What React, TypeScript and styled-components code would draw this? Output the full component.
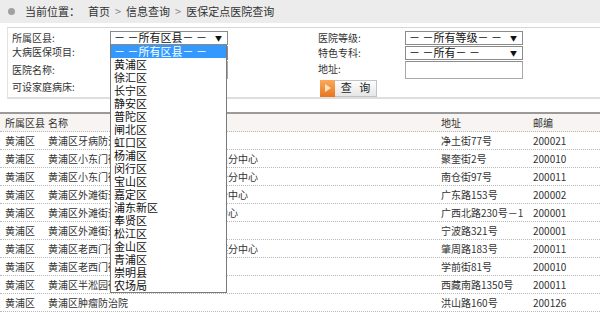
import React from "react";
import styled, { createGlobalStyle } from "styled-components";

const GlobalStyle = createGlobalStyle`
  html, body {
    margin: 0;
    padding: 0;
    background: #fff;
  }
  body {
    font-family: "Noto Sans CJK SC", "Liberation Sans", sans-serif;
    color: #333;
  }
`;

const Page = styled.div`
  position: relative;
  width: 600px;
  height: 313px;
  overflow: hidden;
  font-size: 10px;
  line-height: 1.2;
`;

const CrumbBar = styled.div`
  display: flex;
  align-items: center;
  height: 23px;
  padding-left: 8px;
  background: #ececec;
  font-size: 11px;
  color: #333;
  white-space: nowrap;
`;

const Dot = styled.span`
  flex-shrink: 0;
  display: block;
  width: 7px;
  height: 7px;
  border-radius: 50%;
  background: #a0a0a0;
  margin-right: 10px;
`;

const CrumbLink = styled.span`
  margin-left: 8px;
`;

const Sep = styled.span`
  margin: 0 5px;
  color: #888;
`;

const FormPanel = styled.div`
  margin: 4px 0 0 7px;
  padding: 3px 0 0 4px;
  height: 66px;
  border-top: 1px solid #d6d6d6;
  border-left: 1px solid #e2e2e2;
  border-bottom: 2px solid #dedede;
  display: grid;
  grid-template-columns: 98px 208px 87px 118px;
  grid-template-rows: 14px 14px 18px 18px;
  row-gap: 1px;
  align-items: center;
`;

const Label = styled.div<{ $up?: number }>`
  font-size: 10px;
  color: #333;
  white-space: nowrap;
  transform: translateY(${({ $up }) => -($up || 0)}px);
`;

const FieldWrap = styled.div`
  position: relative;
  height: 100%;
`;

const SelectBox = styled.div`
  box-sizing: border-box;
  display: flex;
  align-items: center;
  justify-content: space-between;
  width: 118px;
  height: 100%;
  padding: 0 5px 0 3px;
  border: 1px solid #8a8a8a;
  background: #fff;
  font-size: 11px;
  color: #111;
  white-space: nowrap;
`;

const Arrow = styled.span`
  font-size: 7px;
  color: #111;
`;

const TextInput = styled.div`
  box-sizing: border-box;
  width: 118px;
  height: 100%;
  border: 1px solid #a8a8a8;
  border-top-color: #8c8c8c;
  background: #fff;
`;

const DropList = styled.ul`
  position: absolute;
  top: 100%;
  left: 0;
  z-index: 5;
  box-sizing: border-box;
  width: 117px;
  margin: 0;
  padding: 0;
  list-style: none;
  border: 1px solid #7a7a7a;
  border-top: none;
  background: #fff;
`;

const DropItem = styled.li<{ $active?: boolean }>`
  height: 13px;
  line-height: 13px;
  padding-left: 3px;
  font-size: 11px;
  color: ${({ $active }) => ($active ? "#fff" : "#111")};
  background: ${({ $active }) => ($active ? "#3399ff" : "#fff")};
  white-space: nowrap;
`;

const QueryButton = styled.div`
  display: flex;
  height: 17px;
  width: 57px;
  margin-left: 2px;
  transform: translateY(-1px);
`;

const ButtonIcon = styled.span`
  display: flex;
  align-items: center;
  justify-content: center;
  width: 15px;
  background: linear-gradient(#f9ab5a, #e8741f);
`;

const ButtonText = styled.span`
  flex: 1;
  display: flex;
  align-items: center;
  justify-content: center;
  border: 1px solid #c3c3c3;
  border-left: none;
  background: linear-gradient(#fdfdfd, #e6e6e6);
  font-size: 11px;
  white-space: pre;
  color: #222;
`;

const Table = styled.div`
  margin-top: 13px;
  border-top: 2px solid #9a9a9a;
`;

const Row = styled.div<{ $head?: boolean }>`
  display: grid;
  grid-template-columns: 43px 393px 92px 1fr;
  align-items: center;
  height: 17px;
  line-height: 17px;
  padding-left: 5px;
  background: ${({ $head }) => ($head ? "#f7f4f1" : "#fff")};
  border-bottom: 1px dotted #b8b8b8;
  font-size: 10px;
  color: #333;
  white-space: nowrap;
`;

const Cell = styled.span``;

const districts = [
  "黄浦区", "徐汇区", "长宁区", "静安区", "普陀区", "闸北区", "虹口区", "杨浦区",
  "闵行区", "宝山区", "嘉定区", "浦东新区", "奉贤区", "松江区", "金山区", "青浦区",
  "崇明县", "农场局",
];

const rows = [
  ["黄浦区", "黄浦区牙病防治所", "净土街77号", "200021"],
  ["黄浦区", "黄浦区小东门街道社区卫生服务中心东昌分中心", "聚奎街2号", "200010"],
  ["黄浦区", "黄浦区小东门街道社区卫生服务中心南仓分中心", "南仓街97号", "200011"],
  ["黄浦区", "黄浦区外滩街道社区卫生服务中心金陵分中心", "广东路153号", "200002"],
  ["黄浦区", "黄浦区外滩街道社区卫生服务中心宁波中心", "广西北路230号－1", "200001"],
  ["黄浦区", "黄浦区外滩街道社区卫生服务站", "宁波路321号", "200001"],
  ["黄浦区", "黄浦区老西门街道社区卫生服务中心蓬莱分中心", "肇周路183号", "200011"],
  ["黄浦区", "黄浦区老西门街道社区卫生服务站", "学前街81号", "200010"],
  ["黄浦区", "黄浦区半淞园街道社区卫生服务站", "西藏南路1350号", "200011"],
  ["黄浦区", "黄浦区肿瘤防治院", "洪山路160号", "200126"],
];

export default function App() {
  return (
    <Page>
      <GlobalStyle />
      <CrumbBar>
        <Dot />
        当前位置：
        <CrumbLink>首页</CrumbLink>
        <Sep>&gt;</Sep>信息查询<Sep>&gt;</Sep>医保定点医院查询
      </CrumbBar>

      <FormPanel>
        <Label>所属区县:</Label>
        <FieldWrap>
          <SelectBox>
            <span>－ －所有区县－ －</span>
            <Arrow>▼</Arrow>
          </SelectBox>
          <DropList>
            <DropItem $active>－ －所有区县－ －</DropItem>
            {districts.map((d) => (
              <DropItem key={d}>{d}</DropItem>
            ))}
          </DropList>
        </FieldWrap>
        <Label>医院等级:</Label>
        <FieldWrap>
          <SelectBox>
            <span>－ －所有等级－ －</span>
            <Arrow>▼</Arrow>
          </SelectBox>
        </FieldWrap>

        <Label $up={1}>大病医保项目:</Label>
        <FieldWrap>
          <SelectBox>
            <span>－ －所有－ －</span>
            <Arrow>▼</Arrow>
          </SelectBox>
        </FieldWrap>
        <Label>特色专科:</Label>
        <FieldWrap>
          <SelectBox>
            <span>－ －所有－ －</span>
            <Arrow>▼</Arrow>
          </SelectBox>
        </FieldWrap>

        <Label>医院名称:</Label>
        <FieldWrap>
          <TextInput />
        </FieldWrap>
        <Label $up={1}>地址:</Label>
        <FieldWrap>
          <TextInput />
        </FieldWrap>

        <Label $up={2}>可设家庭病床:</Label>
        <div />
        <QueryButton>
          <ButtonIcon>
            <svg width="6" height="8" viewBox="0 0 6 8">
              <path d="M0 0 L6 4 L0 8 Z" fill="#fde3c4" />
            </svg>
          </ButtonIcon>
          <ButtonText>{"查   询"}</ButtonText>
        </QueryButton>
        <div />
      </FormPanel>

      <Table>
        <Row $head>
          <Cell>所属区县</Cell>
          <Cell>名称</Cell>
          <Cell>地址</Cell>
          <Cell>邮编</Cell>
        </Row>
        {rows.map((r, i) => (
          <Row key={i}>
            {r.map((c, j) => (
              <Cell key={j}>{c}</Cell>
            ))}
          </Row>
        ))}
      </Table>
    </Page>
  );
}
